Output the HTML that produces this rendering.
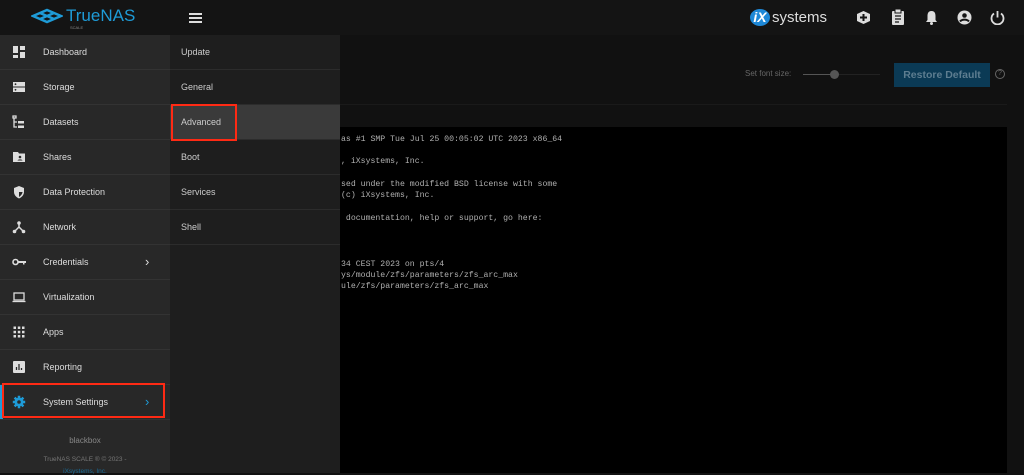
<!DOCTYPE html>
<html><head><meta charset="utf-8"><style>
*{margin:0;padding:0;box-sizing:border-box}
body{width:1024px;height:473px;overflow:hidden;background:#111;font-family:"Liberation Sans",sans-serif;position:relative}
.top{position:absolute;left:0;top:0;width:1024px;height:35px;background:#141414}
.side{position:absolute;left:0;top:35px;width:170px;height:438px;background:#282828}
.sub{position:absolute;left:170px;top:35px;width:170px;height:438px;background:#1e1e1e}
.it{position:absolute;left:0;width:170px;height:35px;border-bottom:1px solid #333;color:#ddd;font-size:9px;line-height:34px;padding-left:43px}
.sub .it{padding-left:11px;border-bottom:1px solid #2c2c2c;color:#ccc}
.ic{position:absolute;left:12px;top:10px;width:14px;height:14px}
.term{position:absolute;left:340px;top:127px;width:667px;height:346px;background:#000;font-family:"Liberation Mono",monospace;font-size:8.2px;color:#b0b0b0;white-space:pre}
.term div{position:absolute;left:1px}
</style></head><body>
<div class="top">
 <svg style="position:absolute;left:31px;top:8px" width="32" height="16" viewBox="0 0 32 16"><g fill="none" stroke="#1e9bd7" stroke-width="2.5"><path d="M2 8 L16 2 L30 8 L16 14 Z"/><path d="M9 5 L23 11 M23 5 L9 11"/></g></svg>
 <div style="position:absolute;left:66px;top:6px;color:#1e9bd7;font-size:17px">TrueNAS</div>
 <div style="position:absolute;left:70px;top:25px;color:#888;font-size:4px">SCALE</div>
 <div style="position:absolute;left:189px;top:13px;width:13px;height:2px;background:#ddd;box-shadow:0 4px 0 #ddd,0 8px 0 #ddd"></div>
 <div style="position:absolute;left:750px;top:9px;width:20px;height:17px;border-radius:50%;background:#1e88d7;color:#fff;font-size:14px;font-weight:bold;line-height:17px;text-align:center;font-style:italic">iX</div>
 <div style="position:absolute;left:772px;top:9px;color:#ddd;font-size:15px">systems</div>
 <svg style="position:absolute;left:856px;top:10px" width="15" height="15" viewBox="0 0 15 15"><path d="M7.5 1 L14 4 V11 L7.5 14 L1 11 V4 Z" fill="#ddd"/><path d="M4 7.5 H11 M7.5 4 V11" stroke="#141414" stroke-width="2"/></svg>
 <svg style="position:absolute;left:891px;top:9px" width="14" height="16" viewBox="0 0 14 16"><rect x="1" y="2" width="12" height="14" rx="1" fill="#ddd"/><rect x="4" y="0" width="6" height="4" fill="#ddd" stroke="#141414"/><path d="M4 7H10M4 10H10M4 13H8" stroke="#141414" stroke-width="1.3"/></svg>
 <svg style="position:absolute;left:925px;top:10px" width="13" height="15" viewBox="0 0 13 15"><path d="M6.5 1 C3 1 2.5 4 2.5 6 V10 L1 12 H12 L10.5 10 V6 C10.5 4 10 1 6.5 1 Z" fill="#ddd"/><circle cx="6.5" cy="13.5" r="1.5" fill="#ddd"/></svg>
 <svg style="position:absolute;left:957px;top:10px" width="15" height="15" viewBox="0 0 15 15"><circle cx="7.5" cy="7.5" r="7" fill="#ddd"/><circle cx="7.5" cy="5.5" r="2.3" fill="#141414"/><path d="M3 11.5 C5 9 10 9 12 11.5" stroke="#141414" stroke-width="2" fill="none"/></svg>
 <svg style="position:absolute;left:990px;top:10px" width="15" height="15" viewBox="0 0 15 15"><path d="M4 3.5 A6 6 0 1 0 11 3.5" stroke="#ddd" stroke-width="1.8" fill="none"/><path d="M7.5 1 V7.5" stroke="#ddd" stroke-width="1.8"/></svg>
</div>
<div style="position:absolute;left:745px;top:69px;color:#666;font-size:8px">Set font size:</div>
<div style="position:absolute;left:803px;top:74px;width:32px;height:1px;background:#555"></div>
<div style="position:absolute;left:835px;top:74px;width:45px;height:1px;background:#222"></div>
<div style="position:absolute;left:830px;top:70px;width:9px;height:9px;border-radius:50%;background:#555"></div>
<div style="position:absolute;left:894px;top:63px;width:96px;height:24px;background:#0b3a55;color:#5d7d90;font-size:10.5px;font-weight:bold;display:flex;align-items:center;justify-content:center">Restore Default</div>
<div style="position:absolute;left:995px;top:69px;width:10px;height:10px;border:1px solid #666;border-radius:50%;color:#666;font-size:7px;line-height:8px;text-align:center">?</div>
<div style="position:absolute;left:340px;top:104px;width:667px;height:1px;background:#1a1a1a"></div>
<div class="term">
<div style="top:8px">as #1 SMP Tue Jul 25 00:05:02 UTC 2023 x86_64</div>
<div style="top:30px">, iXsystems, Inc.</div>
<div style="top:53px">sed under the modified BSD license with some</div>
<div style="top:64px">(c) iXsystems, Inc.</div>
<div style="top:87px"> documentation, help or support, go here:</div>
<div style="top:133px">34 CEST 2023 on pts/4</div>
<div style="top:144px">ys/module/zfs/parameters/zfs_arc_max</div>
<div style="top:155px">ule/zfs/parameters/zfs_arc_max</div>
</div>
<div class="side">
 <div class="it" style="top:0">Dashboard<svg class="ic" viewBox="0 0 14 14"><path d="M1 1H6V8H1ZM8 1H13V5H8ZM8 7H13V13H8ZM1 10H6V13H1Z" fill="#ddd"/></svg></div>
 <div class="it" style="top:35px">Storage<svg class="ic" viewBox="0 0 14 14"><rect x="1" y="2" width="12" height="4.5" fill="#ddd"/><rect x="1" y="7.5" width="12" height="4.5" fill="#ddd"/><circle cx="3.5" cy="4.2" r="0.9" fill="#282828"/><circle cx="3.5" cy="9.8" r="0.9" fill="#282828"/></svg></div>
 <div class="it" style="top:70px">Datasets<svg class="ic" viewBox="0 0 14 14"><path d="M1 1H4V3H1ZM2 3V12H5M2 7H5" stroke="#ddd" fill="none" stroke-width="1.3"/><rect x="6" y="6" width="6" height="2.5" fill="#ddd"/><rect x="6" y="10.5" width="6" height="2.5" fill="#ddd"/></svg></div>
 <div class="it" style="top:105px">Shares<svg class="ic" viewBox="0 0 14 14"><path d="M1 2H6L7 3.5H13V12H1Z" fill="#ddd"/><circle cx="8" cy="7" r="1.3" fill="#282828"/><path d="M5.5 10.5C6 9 10 9 10.5 10.5Z" fill="#282828"/></svg></div>
 <div class="it" style="top:140px">Data Protection<svg class="ic" viewBox="0 0 14 14"><path d="M7 1L12 3V7C12 10 9.5 12.5 7 13.5C4.5 12.5 2 10 2 7V3Z" fill="#ddd"/><path d="M7 2.5V7H10.5V7.5C10 9.5 8.5 11 7 12Z" fill="#282828"/></svg></div>
 <div class="it" style="top:175px">Network<svg class="ic" viewBox="0 0 14 14"><circle cx="7" cy="3" r="1.8" fill="#ddd"/><circle cx="2.5" cy="11.5" r="1.8" fill="#ddd"/><circle cx="11.5" cy="11.5" r="1.8" fill="#ddd"/><path d="M7 3V7L2.5 11.5M7 7L11.5 11.5" stroke="#ddd" stroke-width="1.5" fill="none"/></svg></div>
 <div class="it" style="top:210px">Credentials<svg class="ic" viewBox="0 0 14 14"><circle cx="3.5" cy="7" r="2.5" stroke="#ddd" stroke-width="1.6" fill="none"/><path d="M6 6H14V8H12.5V9.5H11V8H6Z" fill="#ddd"/></svg><span style="position:absolute;left:145px;top:0;font-size:13px;color:#ddd">›</span></div>
 <div class="it" style="top:245px">Virtualization<svg class="ic" viewBox="0 0 14 14"><rect x="2" y="3" width="10" height="7" stroke="#ddd" stroke-width="1.3" fill="none"/><path d="M0.5 11.5H13.5" stroke="#ddd" stroke-width="1.3"/></svg></div>
 <div class="it" style="top:280px">Apps<svg class="ic" viewBox="0 0 14 14" fill="#ddd"><rect x="1.5" y="1.5" width="2.5" height="2.5"/><rect x="5.8" y="1.5" width="2.5" height="2.5"/><rect x="10" y="1.5" width="2.5" height="2.5"/><rect x="1.5" y="5.8" width="2.5" height="2.5"/><rect x="5.8" y="5.8" width="2.5" height="2.5"/><rect x="10" y="5.8" width="2.5" height="2.5"/><rect x="1.5" y="10" width="2.5" height="2.5"/><rect x="5.8" y="10" width="2.5" height="2.5"/><rect x="10" y="10" width="2.5" height="2.5"/></svg></div>
 <div class="it" style="top:315px">Reporting<svg class="ic" viewBox="0 0 14 14"><rect x="1" y="1" width="12" height="12" rx="1" fill="#ddd"/><path d="M4.5 10V7M7 10V4M9.5 10V8" stroke="#282828" stroke-width="1.3"/></svg></div>
 <div class="it" style="top:350px;box-shadow:inset 3px 0 0 #1e9bd7">System Settings<svg class="ic" viewBox="0 0 14 14"><circle cx="7" cy="7" r="4.5" fill="#1e9bd7"/><g stroke="#1e9bd7" stroke-width="2.5"><path d="M7 0.8V13.2M0.8 7H13.2M2.6 2.6L11.4 11.4M11.4 2.6L2.6 11.4"/></g><circle cx="7" cy="7" r="1.8" fill="#282828"/></svg><span style="position:absolute;left:145px;top:0;font-size:13px;color:#1e9bd7">›</span></div>
 <div style="position:absolute;left:2px;top:348px;width:163px;height:35px;border:2px solid #ff2a14"></div>
 <div style="position:absolute;left:0;top:401px;width:170px;text-align:center;color:#888;font-size:8px">blackbox</div>
 <div style="position:absolute;left:0;top:421px;width:170px;text-align:center;color:#777;font-size:6.5px">TrueNAS SCALE ® © 2023 -</div>
 <div style="position:absolute;left:0;top:433px;width:170px;text-align:center;color:#1a6a95;font-size:6.5px">iXsystems, Inc.</div>
</div>
<div class="sub">
 <div class="it" style="top:0">Update</div>
 <div class="it" style="top:35px">General</div>
 <div class="it" style="top:70px;background:#3a3a3a">Advanced</div>
 <div style="position:absolute;left:1px;top:69px;width:66px;height:37px;border:2px solid #ff2a14"></div>
 <div class="it" style="top:105px">Boot</div>
 <div class="it" style="top:140px">Services</div>
 <div class="it" style="top:175px">Shell</div>
</div>
</body></html>
